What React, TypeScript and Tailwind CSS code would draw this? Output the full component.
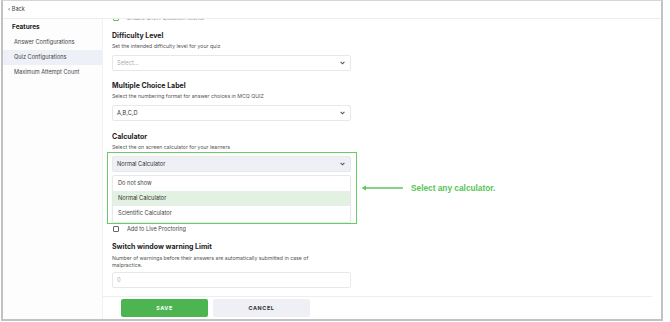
import React from "react";

const SIDE_ITEMS = ["Answer Configurations", "Quiz Configurations", "Maximum Attempt Count"];

function Chevron() {
  return (
    <svg width="5" height="4" viewBox="0 0 5 4" className="shrink-0">
      <path d="M0.6 0.8 L2.5 2.8 L4.4 0.8" fill="none" stroke="#4b5563" strokeWidth="1.1" />
    </svg>
  );
}

function SelectBox({ value, placeholder, active }: { value?: string; placeholder?: string; active?: boolean }) {
  return (
    <div
      className={`mt-[5px] flex h-[16px] w-[239px] items-center justify-between rounded-[2px] border border-[#e6e8ec] pl-[4px] pr-[5px] text-[5.7px] ${
        active ? "bg-[#eef0f5]" : "bg-white"
      }`}
    >
      <span className={value ? "text-[#333]" : "text-[#a8acb3]"}>{value ?? placeholder}</span>
      <Chevron />
    </div>
  );
}

function Section({ title, desc, children, top }: { title: string; desc: string; children: React.ReactNode; top: string }) {
  return (
    <div className={top}>
      <div className="h-[10px] text-[7px] leading-[10px] font-bold text-[#222]">{title}</div>
      <div className="mt-[2px] h-[7px] text-[5.2px] leading-[7px] text-[#555]">{desc}</div>
      {children}
    </div>
  );
}

export default function App() {
  return (
    <div className="relative h-[322px] w-[670px] bg-white" style={{ fontFamily: "Inter, 'Noto Sans', sans-serif" }}>
      <div className="ml-[1px] flex h-[321px] w-[662px] flex-col border-x-2 border-t border-b-2 border-x-[#c2c2c2] border-t-[#d6d6d6] border-b-[#c2c2c2] bg-white">
        {/* top bar */}
        <div className="flex h-[18px] shrink-0 items-center border-b border-[#ededed] pl-[5px] text-[5.6px] text-[#444]">
          ‹ Back
        </div>

        <div className="flex min-h-0 flex-1">
          {/* sidebar */}
          <div className="w-[100px] shrink-0 border-r border-[#f1f1f3] bg-[#fdfdfd] pt-[4px]">
            <div className="h-[9px] pl-[9px] text-[6.5px] leading-[9px] font-bold text-[#222]">Features</div>
            <div className="mt-[3px]">
              {SIDE_ITEMS.map((item) => (
                <div
                  key={item}
                  className={`flex h-[15px] items-center pl-[11px] text-[5.6px] text-[#444] ${
                    item === "Quiz Configurations" ? "bg-[#eef0f7]" : ""
                  }`}
                >
                  {item}
                </div>
              ))}
            </div>
          </div>

          {/* main */}
          <div className="min-w-0 flex-1 overflow-hidden pl-[9px]">
            <div className="-mt-[5px] flex h-[8px] items-center gap-[8px] pl-[1px]">
              <div className="h-[6px] w-[6px] rounded-[1px] border border-[#5cbf60]" />
              <span className="text-[5.6px] text-[#888]">Enable Short Question Marks</span>
            </div>

            <Section top="mt-[9px]" title="Difficulty Level" desc="Set the intended difficulty level for your quiz">
              <SelectBox placeholder="Select..." />
            </Section>

            <Section
              top="mt-[10px]"
              title="Multiple Choice Label"
              desc="Select the numbering format for answer choices in MCQ QUIZ"
            >
              <SelectBox value="A,B,C,D" />
            </Section>

            <Section top="mt-[11px]" title="Calculator" desc="Select the on screen calculator for your learners">
              <SelectBox value="Normal Calculator" active />
              <div className="mt-[3px] w-[239px] rounded-[2px] border border-[#e6e8ec] bg-white pb-[1px] shadow-[0_1px_2px_rgba(0,0,0,0.05)]">
                <div className="flex h-[15px] items-center pl-[5px] text-[5.7px] text-[#444]">Do not show</div>
                <div className="flex h-[15px] items-center bg-[#e2f1e1] pl-[5px] text-[5.7px] text-[#333]">
                  Normal Calculator
                </div>
                <div className="flex h-[15px] items-center pl-[5px] text-[5.7px] text-[#444]">Scientific Calculator</div>
              </div>
            </Section>

            <div className="mt-[1px] flex h-[10px] items-center gap-[8px] pl-[1px]">
              <div className="h-[6px] w-[6px] rounded-[1px] border border-[#666]" />
              <span className="text-[5.6px] text-[#444]">Add to Live Proctoring</span>
            </div>

            <div className="mt-[8px]">
              <div className="h-[10px] text-[7px] leading-[10px] font-bold text-[#222]">Switch window warning Limit</div>
              <div className="mt-[3px] w-[208px] text-[5.2px] leading-[7px] text-[#555]">
                Number of warnings before their answers are automatically submitted in case of malpractice.
              </div>
              <div className="mt-[3px] flex h-[16px] w-[239px] items-center rounded-[2px] border border-[#e6e8ec] pl-[4px] text-[5.7px] text-[#aaa]">
                0
              </div>
            </div>

            <div className="-ml-[9px] mt-[8px] h-px w-[549px] bg-[#eeeeee]" />

            <div className="mt-[2px] flex gap-[5px] pl-[9px]">
              <button className="flex h-[18px] w-[87px] items-center justify-center rounded-[2px] bg-[#4cb552] text-[5.4px] font-bold tracking-[0.6px] text-white">
                SAVE
              </button>
              <button className="flex h-[18px] w-[97px] items-center justify-center rounded-[2px] bg-[#eef0f5] text-[5.4px] font-bold tracking-[0.6px] text-[#333]">
                CANCEL
              </button>
            </div>
          </div>
        </div>
      </div>

      {/* annotation overlay */}
      <div className="absolute left-[107px] top-[152px] h-[72px] w-[250px] border-[1.5px] border-[#66cc66]" />
      <svg className="absolute left-[360px] top-[184px]" width="46" height="8" viewBox="0 0 46 8">
        <line x1="4" y1="4" x2="43" y2="4" stroke="#5cc75c" strokeWidth="1.3" />
        <path d="M1.5 4 L6 1.6 L6 6.4 Z" fill="#5cc75c" />
      </svg>
      <div
        className="absolute left-[411px] top-[183px] h-[10px] text-[8.3px] leading-[10px] font-bold text-[#55c455]"
        style={{ fontFamily: "'Liberation Sans', Arial, sans-serif" }}
      >
        Select any calculator.
      </div>
    </div>
  );
}
